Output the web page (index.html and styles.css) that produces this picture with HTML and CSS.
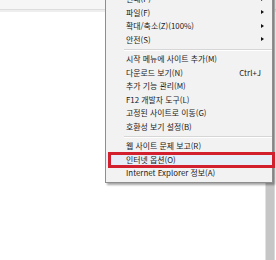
FILE: index.html
```
<!DOCTYPE html>
<html lang="ko">
<head>
    <meta charset="UTF-8">
    <title>도구 메뉴</title>
    <link rel="stylesheet" href="styles.css">
</head>
<body>
<div class="page">
    <div class="topbar"></div>
    <div class="scrollbar"></div>

    <ul class="menu">
        <li class="sub">인쇄(P)</li>
        <li class="sub">파일(F)</li>
        <li class="sub">확대/축소(Z)(100%)</li>
        <li class="sub">안전(S)</li>
        <li class="sep"></li>
        <li>시작 메뉴에 사이트 추가(M)</li>
        <li>다운로드 보기(N)<span class="key">Ctrl+J</span></li>
        <li>추가 기능 관리(M)</li>
        <li>F12 개발자 도구(L)</li>
        <li>고정된 사이트로 이동(G)</li>
        <li>호환성 보기 설정(B)</li>
        <li class="sep"></li>
        <li>웹 사이트 문제 보고(R)</li>
        <li class="on">인터넷 옵션(O)</li>
        <li>Internet Explorer 정보(A)</li>
    </ul>
</div>
</body>
</html>
```

FILE: styles.css
```
* {
    margin: 0;
    padding: 0;
    box-sizing: border-box;
}

body {
    background: #fff;
    font-family: "Noto Sans CJK KR", "Noto Sans", sans-serif;
}

.page {
    position: relative;
    width: 276px;
    height: 260px;
    overflow: hidden;
}

.topbar {
    height: 12px;
    background: #f6f6f6;
    border-bottom: 2px solid #eeeeee;
    box-shadow: inset 0 -1px 0 #dddddd;
}

.scrollbar {
    position: absolute;
    top: 0;
    right: 1px;
    width: 10px;
    height: 260px;
    background: #c6c6c6;
    border-left: 1px solid #e2e2e2;
    border-right: 1px solid #dadada;
}

/* 도구 메뉴 (위쪽이 잘려 보임) */
.menu {
    position: absolute;
    left: 105px;
    top: -11px;
    width: 168px;
    padding: 2px 0;
    list-style: none;
    background: #f2f2f2;
    border: 1px solid #8e8e8e;
    box-shadow: 2px 2px 2px rgba(0, 0, 0, .35);
    font-size: 7.9px;
    color: #1a1a1a;
}

.menu li {
    position: relative;
    display: flex;
    align-items: center;
    justify-content: space-between;
    height: 13.5px;
    padding: 0 11px 0 20px;
    white-space: nowrap;
}

.menu .sub::after {
    content: "";
    border-left: 3px solid #111;
    border-top: 2.5px solid transparent;
    border-bottom: 2.5px solid transparent;
    margin-right: -3px;
}

.menu .sep {
    height: 6px;
    padding: 0;
    margin-left: 18px;
}

.menu .sep::before {
    content: "";
    flex: 1;
    height: 1px;
    background: #d6d6d6;
    box-shadow: 0 1px 0 #fff;
}

.menu .on {
    background: #e8eef8;
}

.menu .on::after {
    content: "";
    position: absolute;
    top: -1px;
    bottom: -2px;
    left: 2px;
    right: -3px;
    border: 3px solid #d3202f;
}
```
